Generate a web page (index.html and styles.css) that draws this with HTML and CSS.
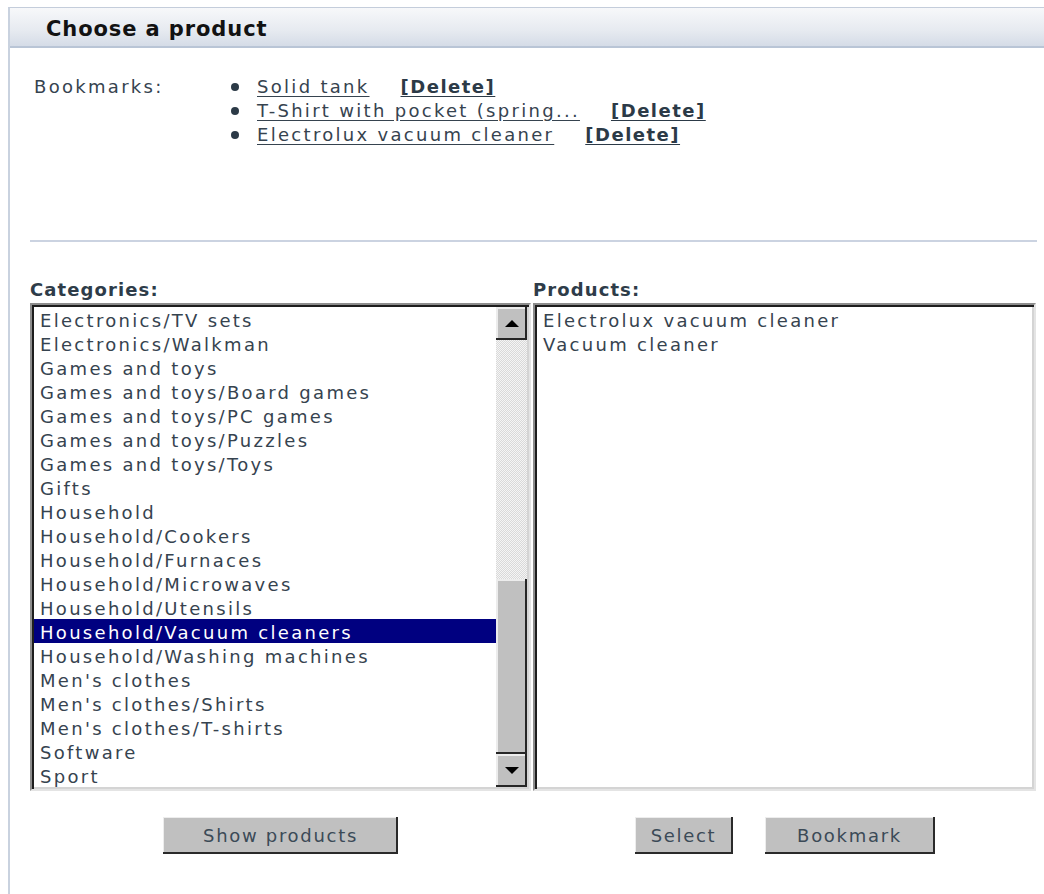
FILE: index.html
```html
<!DOCTYPE html>
<html lang="en">
<head>
<meta charset="utf-8">
<title>Choose a product</title>
<link rel="stylesheet" href="styles.css">
</head>
<body>
<div class="panel">
  <div class="panel-head"><h1 class="panel-title">Choose a product</h1></div>
  <div class="panel-body">
    <div class="bookmarks">
      <div class="bm-label">Bookmarks:</div>
      <ul class="bm-list">
        <li class="bm-item"><a class="bm-link" href="#">Solid tank</a><a class="bm-del" href="#">[Delete]</a></li>
        <li class="bm-item"><a class="bm-link" href="#">T-Shirt with pocket (spring...</a><a class="bm-del" href="#">[Delete]</a></li>
        <li class="bm-item"><a class="bm-link" href="#">Electrolux vacuum cleaner</a><a class="bm-del" href="#">[Delete]</a></li>
      </ul>
    </div>

    <div class="sep"></div>

    <div class="pickers">
      <div class="picker">
        <div class="picker-label">Categories:</div>
        <div class="listbox">
          <ul class="options">
            <li class="opt">Electronics/TV sets</li>
            <li class="opt">Electronics/Walkman</li>
            <li class="opt">Games and toys</li>
            <li class="opt">Games and toys/Board games</li>
            <li class="opt">Games and toys/PC games</li>
            <li class="opt">Games and toys/Puzzles</li>
            <li class="opt">Games and toys/Toys</li>
            <li class="opt">Gifts</li>
            <li class="opt">Household</li>
            <li class="opt">Household/Cookers</li>
            <li class="opt">Household/Furnaces</li>
            <li class="opt">Household/Microwaves</li>
            <li class="opt">Household/Utensils</li>
            <li class="opt selected">Household/Vacuum cleaners</li>
            <li class="opt">Household/Washing machines</li>
            <li class="opt">Men's clothes</li>
            <li class="opt">Men's clothes/Shirts</li>
            <li class="opt">Men's clothes/T-shirts</li>
            <li class="opt">Software</li>
            <li class="opt">Sport</li>
          </ul>
          <div class="scrollbar">
            <div class="sb-btn"><span class="arrow-up"></span></div>
            <div class="sb-track"></div>
            <div class="sb-thumb"></div>
            <div class="sb-btn"><span class="arrow-down"></span></div>
          </div>
        </div>
      </div>

      <div class="picker">
        <div class="picker-label">Products:</div>
        <div class="listbox">
          <ul class="options">
            <li class="opt">Electrolux vacuum cleaner</li>
            <li class="opt">Vacuum cleaner</li>
          </ul>
        </div>
      </div>

      <div class="actions">
        <button class="btn btn-show" type="button">Show products</button>
      </div>
      <div class="actions">
        <button class="btn btn-select" type="button">Select</button>
        <button class="btn btn-bookmark" type="button">Bookmark</button>
      </div>
    </div>
  </div>
</div>
</body>
</html>
```

FILE: styles.css
```css
html, body {
  margin: 0;
  padding: 0;
  background: #ffffff;
  overflow: hidden;
}

body {
  font-family: "DejaVu Sans", Verdana, sans-serif;
  font-size: 18px;
  color: #36434f;
}

/* outer dialog frame, open on the right */
.panel {
  margin: 7px 0 0 8px;
  border-top: 1px solid #c4cddb;
  border-left: 2px solid #c9d2df;
  min-height: 900px;
}

.panel-head {
  box-sizing: border-box;
  height: 40px;
  background: linear-gradient(#f7f8fa, #e6eaf0 60%, #d5dce7);
  border-bottom: 2px solid #b9c5d6;
  display: flex;
  align-items: center;
  padding: 4px 0 0 36px;
}

.panel-title {
  margin: 0;
  font-size: 21px;
  font-weight: bold;
  letter-spacing: 0.9px;
  color: #121212;
}

.panel-body {
  padding: 26px 0 0 20px;
}

/* bookmarks block */
.bookmarks {
  display: flex;
  padding: 1px 0 0 4px;
  line-height: 24px;
  letter-spacing: 2.3px;
}

.bm-label {
  width: 197px;
  flex: none;
}

.bm-list {
  list-style: none;
  margin: 0;
  padding: 0;
}

.bm-item {
  display: flex;
  align-items: center;
}

.bm-item::before {
  content: "";
  width: 8px;
  height: 8px;
  border-radius: 50%;
  background: #2c3a47;
  margin-right: 18px;
  flex: none;
}

.bm-link {
  color: #36434f;
  text-decoration: underline;
  text-underline-offset: 3px;
}

.bm-del {
  margin-left: 31px;
  color: #2c3a47;
  font-weight: bold;
  letter-spacing: 1.5px;
  text-decoration: underline;
  text-underline-offset: 3px;
}

.sep {
  height: 2px;
  background: #cbd3e1;
  margin: 93px 7px 0 0;
}

/* category / product pickers */
.pickers {
  display: grid;
  grid-template-columns: 501px 503px;
  column-gap: 2px;
  margin-top: 38px;
}

.picker-label {
  font-weight: bold;
  letter-spacing: 1.1px;
  line-height: 20px;
  color: #2e3c49;
  margin-bottom: 3px;
}

.listbox {
  display: flex;
  height: 480px;
  border: 2px solid;
  border-color: #8d8d8d #e4e4e4 #e4e4e4 #8d8d8d;
  box-shadow: inset 2px 2px #1e1e1e, inset -2px -2px #d4d4d4;
  padding: 2px;
  background: #ffffff;
}

.options {
  list-style: none;
  margin: 0;
  padding: 0;
  flex: 1;
  min-width: 0;
}

.opt {
  box-sizing: border-box;
  height: 24px;
  line-height: 24px;
  padding: 2px 0 0 6px;
  letter-spacing: 2.3px;
  white-space: nowrap;
}

.opt.selected {
  background: #000080;
  color: #ffffff;
}

/* classic scrollbar */
.scrollbar {
  width: 31px;
  flex: none;
  display: flex;
  flex-direction: column;
}

.sb-btn,
.sb-thumb {
  background: #c0c0c0;
  box-shadow: inset -2px -2px #262626, inset 2px 2px #ececec;
}

.sb-btn {
  height: 33px;
  flex: none;
  display: flex;
  align-items: center;
  justify-content: center;
}

.sb-track {
  height: 239px;
  background: repeating-conic-gradient(#d9d9d9 0 25%, #f5f5f5 0 50%) 0 0 / 2px 2px;
}

.sb-thumb {
  flex: 1;
}

.arrow-up,
.arrow-down {
  width: 0;
  height: 0;
  border-left: 7px solid transparent;
  border-right: 7px solid transparent;
}

.arrow-up {
  border-bottom: 7px solid #000000;
}

.arrow-down {
  border-top: 7px solid #000000;
}

/* buttons under each list */
.actions {
  display: flex;
  justify-content: center;
  gap: 32px;
  margin-top: 26px;
}

.btn {
  height: 37px;
  padding: 0;
  font-family: "DejaVu Sans", Verdana, sans-serif;
  font-size: 18px;
  letter-spacing: 1.7px;
  color: #3b4a57;
  background: #c0c0c0;
  border: none;
  box-shadow: inset -2px -2px #2a2a2a, inset 1px 1px #ededed;
}

.btn-show { width: 235px; }
.btn-select { width: 98px; }
.btn-bookmark { width: 170px; }
```
